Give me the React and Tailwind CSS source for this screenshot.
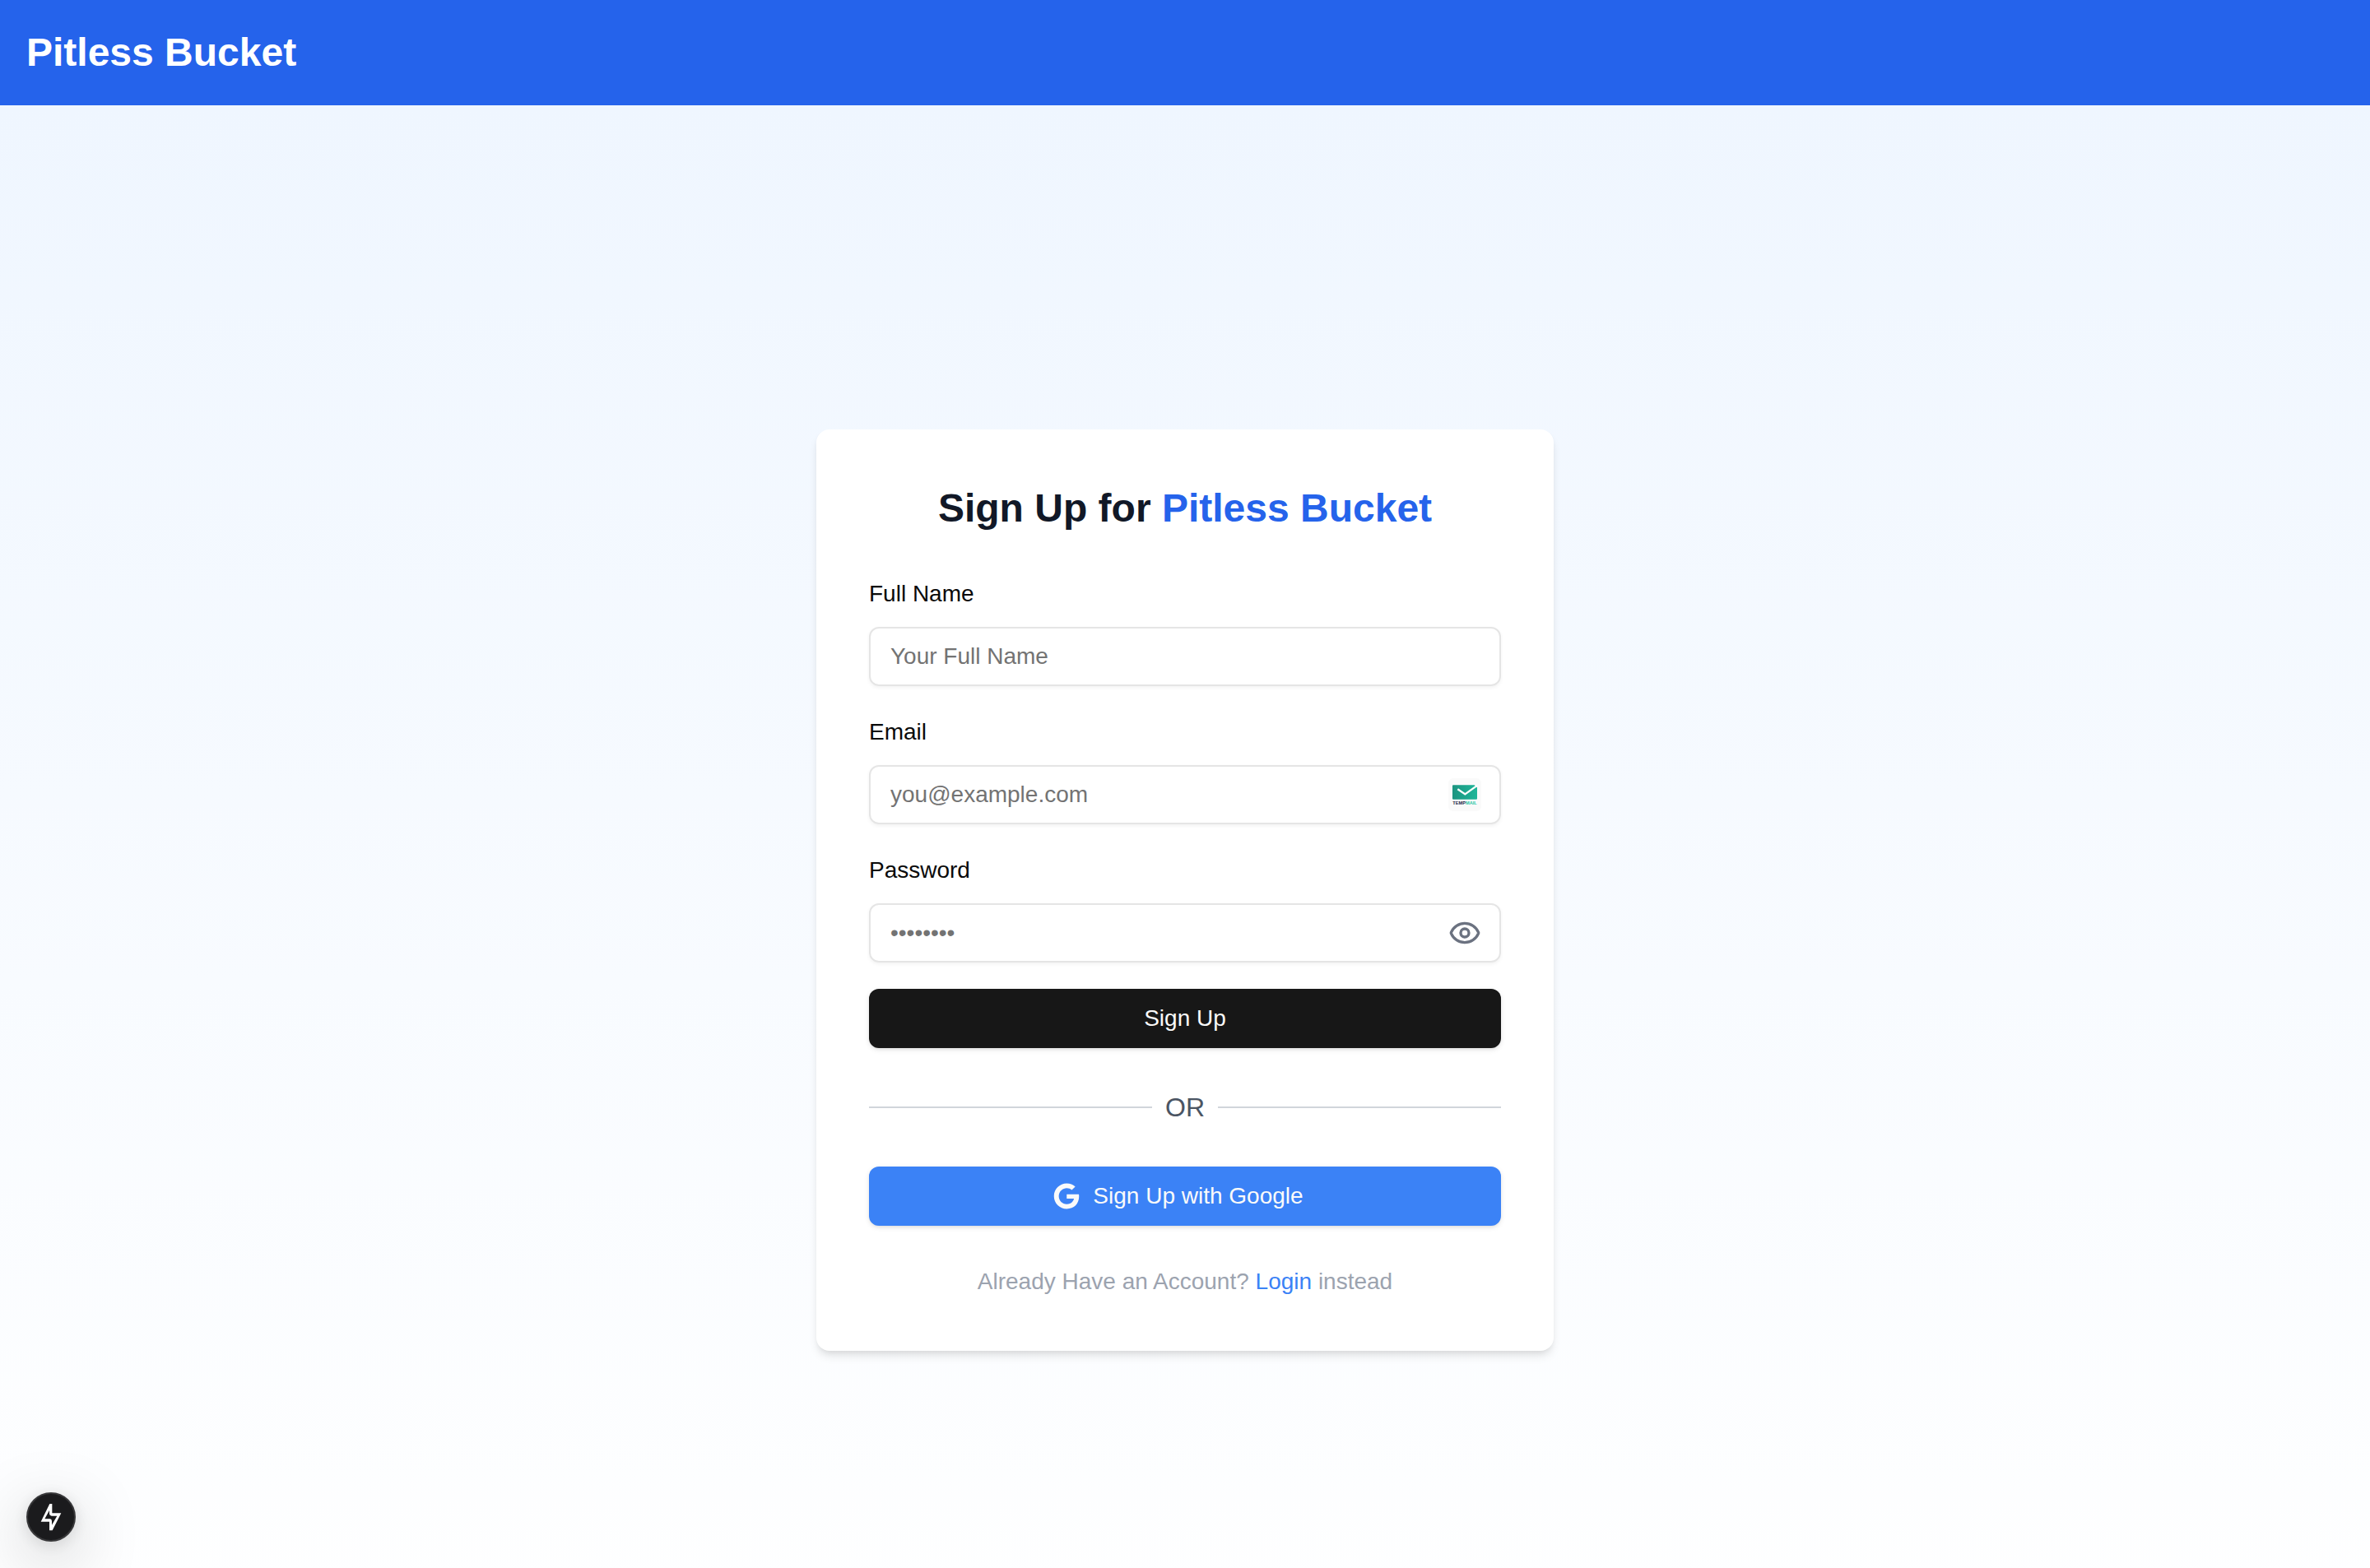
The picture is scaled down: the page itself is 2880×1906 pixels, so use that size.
import { useState } from "react";
import { Eye, EyeOff } from "lucide-react";
import { FaGoogle } from "react-icons/fa";

const inputClass =
  "block h-18 w-full rounded-xl border-2 border-[#e5e5e5] bg-transparent px-6 text-[28px] leading-10 text-neutral-950 shadow-[0_2px_4px_0_rgba(0,0,0,0.05)] outline-none placeholder:text-[#737373] focus-visible:border-neutral-400";

const buttonClass =
  "flex h-18 w-full items-center justify-center gap-4 rounded-xl text-[28px] leading-10 text-neutral-50 shadow-[0_2px_6px_0_rgba(0,0,0,0.1),0_2px_4px_-2px_rgba(0,0,0,0.1)]";

function Field({ id, label, children, ...props }) {
  return (
    <div className="flex flex-col gap-4">
      <label htmlFor={id} className="text-[28px] leading-12 text-neutral-950">
        {label}
      </label>
      <div className="relative">
        <input id={id} name={id} className={inputClass} {...props} />
        {children}
      </div>
    </div>
  );
}

function TempMailBadge() {
  return (
    <button
      type="button"
      aria-label="Fill with a temporary address"
      className="absolute top-4 right-6 size-10 rounded-md bg-[#fafafa]"
    >
      <svg viewBox="0 0 120 120" className="size-10">
        <defs>
          <linearGradient id="envelope" x1="0" y1="0" x2="1" y2="0">
            <stop offset="0" stopColor="#1b9480" />
            <stop offset="1" stopColor="#1fb699" />
          </linearGradient>
        </defs>
        <path
          d="M18 25H95L98 28L102 33H105V74Q105 77 102 77H18Q15 77 15 74V28Q15 25 18 25Z"
          fill="url(#envelope)"
        />
        <path d="M34 40L61 58L106 26" fill="none" stroke="#fff" strokeWidth="7" />
        <text x="16" y="95" fontFamily="Liberation Sans, sans-serif" fontWeight="700" fontSize="17" fill="#1d2445">
          TEMP
        </text>
        <text x="63" y="95" fontFamily="Liberation Sans, sans-serif" fontWeight="700" fontSize="17" fill="#2cc6a6">
          MAIL
        </text>
      </svg>
    </button>
  );
}

function DevIndicator() {
  return (
    <button
      type="button"
      aria-label="Static route"
      className="fixed bottom-8 left-8 size-15 rounded-full border-2 border-[#38383a] bg-[#1b1b1d] shadow-[0_22px_80px_0_rgba(0,0,0,0.25),0_4px_20px_0_rgba(0,0,0,0.12)]"
    >
      <svg viewBox="6 6 168 168" className="size-full">
        <path
          d="M85 42H94V76H127L95 139H84V107H53ZM84 66L67 97H86Q93 98 93 105V119L112 86H92Q84 85 84 78Z"
          fill="#fff"
          fillRule="evenodd"
        />
      </svg>
    </button>
  );
}

export default function App() {
  const [visible, setVisible] = useState(false);
  const ToggleIcon = visible ? EyeOff : Eye;

  return (
    <div className="flex h-screen flex-col overflow-hidden font-['Liberation_Sans',Arial,sans-serif]">
      <header className="shrink-0 bg-[#2563eb] p-8">
        <p className="text-5xl leading-16 font-bold text-white">Pitless Bucket</p>
      </header>

      <main className="flex min-h-screen shrink-0 items-center justify-center bg-linear-to-b/srgb from-[#eff6ff] to-white pt-0.5">
        <section className="w-full max-w-4xl rounded-2xl bg-white p-16 shadow-[0_8px_12px_-2px_rgba(0,0,0,0.1),0_4px_8px_-4px_rgba(0,0,0,0.1)]">
          <h1 className="mb-12 text-center text-5xl leading-16 font-bold text-[#111827]">
            Sign Up for <span className="text-[#2563eb]">Pitless Bucket</span>
          </h1>

          <form className="flex flex-col gap-8" onSubmit={(e) => e.preventDefault()}>
            <Field id="fullName" label="Full Name" type="text" placeholder="Your Full Name" />
            <Field id="email" label="Email" type="email" placeholder="you@example.com">
              <TempMailBadge />
            </Field>
            <Field id="password" label="Password" type={visible ? "text" : "password"} placeholder="••••••••">
              <button
                type="button"
                aria-label={visible ? "Hide password" : "Show password"}
                onClick={() => setVisible(!visible)}
                className="absolute inset-y-0 right-6 flex items-center text-[#6b7280]"
              >
                <ToggleIcon className="size-10" />
              </button>
            </Field>
            <button type="submit" className={`${buttonClass} bg-[#171717]`}>
              Sign Up
            </button>
          </form>

          <div className="my-12 flex items-center">
            <div className="h-0.5 grow bg-[#d1d5db]" />
            <span className="px-4 text-[32px] leading-12 text-[#4b5563]">OR</span>
            <div className="h-0.5 grow bg-[#d1d5db]" />
          </div>

          <button type="button" className={`${buttonClass} bg-[#3b82f6] pr-4`}>
            <FaGoogle className="size-8" />
            Sign Up with Google
          </button>

          <p className="mt-12 text-center text-[28px] leading-10 text-[#9ca3af]">
            Already Have an Account?{" "}
            <a href="#login" className="text-[#3b82f6]">
              Login
            </a>{" "}
            instead
          </p>
        </section>
      </main>

      <DevIndicator />
    </div>
  );
}
